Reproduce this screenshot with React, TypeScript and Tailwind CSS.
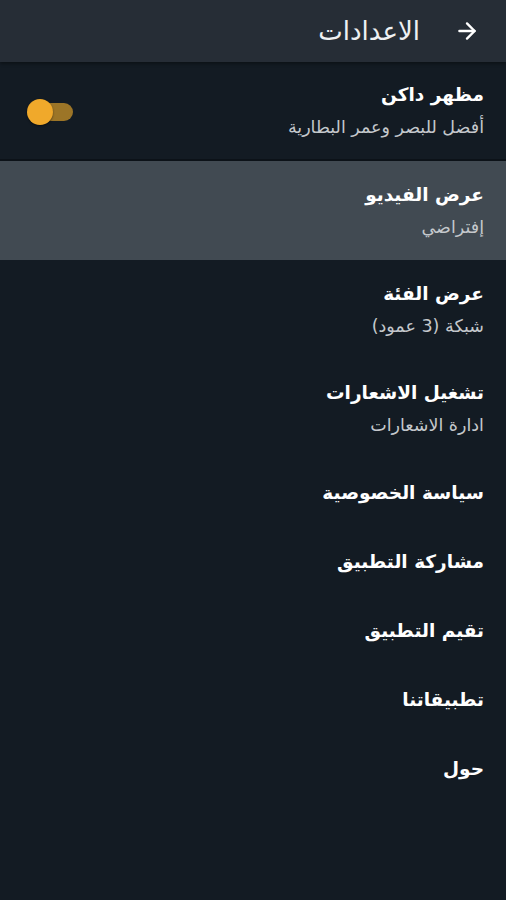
import { ArrowRight } from 'lucide-react';

type Item = { title: string; subtitle?: string; active?: boolean };

const items: Item[] = [
  { title: 'عرض الفيديو', subtitle: 'إفتراضي', active: true },
  { title: 'عرض الفئة', subtitle: 'شبكة (3 عمود)' },
  { title: 'تشغيل الاشعارات', subtitle: 'ادارة الاشعارات' },
  { title: 'سياسة الخصوصية' },
  { title: 'مشاركة التطبيق' },
  { title: 'تقيم التطبيق' },
  { title: 'تطبيقاتنا' },
  { title: 'حول' },
];

const App = () => {
  return (
    <div
      dir="rtl"
      className="w-[506px] h-[900px] bg-[#131b23] text-white overflow-hidden"
      style={{ fontFamily: '"DejaVu Sans", "Noto Sans", sans-serif' }}
    >
      {/* Header */}
      <div className="h-[62px] bg-[#262d36] flex items-center pr-[26px] gap-[34px] shadow-[0_2px_3px_rgba(0,0,0,0.35)] relative z-10">
        <ArrowRight size={26} strokeWidth={2.2} className="text-white" />
        <span className="text-[26px] text-[#eef0f2] leading-[30px]">الاعدادات</span>
      </div>

      {/* Dark mode */}
      <div className="h-[99px] flex items-center justify-between pr-[22px] pl-[27px] border-b-2 border-[#0c1218]">
        <div className="flex flex-col gap-[10px]">
          <span className="text-[18.5px] font-bold leading-[22px]">مظهر داكن</span>
          <span className="text-[17.5px] text-[#c4c8cc] leading-[22px]">أفضل للبصر وعمر البطارية</span>
        </div>
        <div className="relative w-[46px] h-[26px] flex items-center mt-[2px]">
          <div className="absolute left-[6px] w-[40px] h-[18px] rounded-full bg-[#9c7527]" />
          <div className="absolute left-0 w-[26px] h-[26px] rounded-full bg-[#f0a92b] shadow-[0_1px_2px_rgba(0,0,0,0.5)]" />
        </div>
      </div>

      {/* Items */}
      {items.map((item) => (
        <div
          key={item.title}
          className={
            (item.subtitle ? 'h-[99px] ' : 'h-[69px] ') +
            (item.active ? 'bg-[#414a52] ' : '') +
            'flex flex-col justify-center pr-[22px] gap-[10px]'
          }
        >
          <span className="text-[18.5px] font-bold leading-[22px]">{item.title}</span>
          {item.subtitle && (
            <span className="text-[17.5px] text-[#c4c8cc] leading-[22px]">{item.subtitle}</span>
          )}
        </div>
      ))}
    </div>
  );
};

export default App;
